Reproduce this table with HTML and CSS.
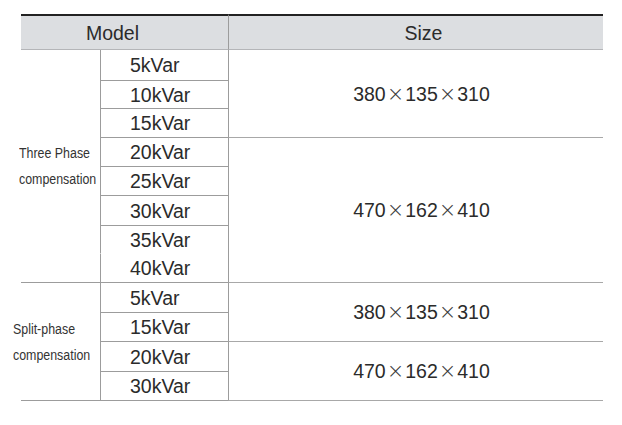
FILE: index.html
```html
<!DOCTYPE html>
<html>
<head>
<meta charset="utf-8">
<link rel="stylesheet" href="styles.css">
</head>
<body>
<table class="spec">
  <colgroup>
    <col class="c-group">
    <col class="c-model">
    <col class="c-size">
  </colgroup>
  <tr class="head">
    <th colspan="2" class="h-model">Model</th>
    <th class="h-size">Size</th>
  </tr>
  <tr class="r1">
    <td rowspan="8" class="group g1"><div class="glabel">Three Phase<br>compensation</div></td>
    <td class="m">5kVar</td>
    <td rowspan="3" class="s">380<span class="x">×</span>135<span class="x">×</span>310</td>
  </tr>
  <tr class="r2"><td class="m">10kVar</td></tr>
  <tr class="r3"><td class="m">15kVar</td></tr>
  <tr class="r4"><td class="m">20kVar</td>
    <td rowspan="5" class="s">470<span class="x">×</span>162<span class="x">×</span>410</td>
  </tr>
  <tr class="r5"><td class="m">25kVar</td></tr>
  <tr class="r6"><td class="m">30kVar</td></tr>
  <tr class="r7"><td class="m noline">35kVar</td></tr>
  <tr class="r8"><td class="m">40kVar</td></tr>
  <tr class="r9">
    <td rowspan="4" class="group g2"><div class="glabel">Split-phase<br>compensation</div></td>
    <td class="m">5kVar</td>
    <td rowspan="2" class="s">380<span class="x">×</span>135<span class="x">×</span>310</td>
  </tr>
  <tr class="r10"><td class="m">15kVar</td></tr>
  <tr class="r11"><td class="m">20kVar</td>
    <td rowspan="2" class="s">470<span class="x">×</span>162<span class="x">×</span>410</td>
  </tr>
  <tr class="r12"><td class="m">30kVar</td></tr>
</table>
</body>
</html>
```
FILE: styles.css
```css
html, body {
  margin: 0;
  padding: 0;
  background: #ffffff;
}
body {
  padding: 14px 0 0 21px;
  font-family: "Liberation Sans", Arial, sans-serif;
  color: #2b2b2b;
}
.spec {
  border-collapse: separate;
  border-spacing: 0;
  width: 582px;
  table-layout: fixed;
}
.c-group { width: 79px; }
.c-model { width: 128px; }
.c-size { width: 375px; }
.spec th, .spec td {
  padding: 0;
  box-sizing: border-box;
  font-weight: normal;
}
.head th {
  height: 36px;
  background: #dcdee1;
  border-top: 2px solid #222222;
  border-bottom: 1px solid #b4b5b8;
  font-size: 19.5px;
  vertical-align: middle;
  line-height: 22px;
}
.h-model {
  text-align: center;
  padding-right: 24px !important;
}
.h-size {
  border-left: 1px solid #9c9c9c;
  text-align: center;
  padding-left: 15px !important;
}
.m {
  border-left: 1px solid #9c9c9c;
  border-bottom: 1px solid #9c9c9c;
  font-size: 19.5px;
  line-height: 22px;
  padding-left: 29px !important;
  text-align: left;
  vertical-align: middle;
}
.m.noline {
  border-bottom-color: transparent;
}
.s {
  border-left: 1px solid #9c9c9c;
  border-bottom: 1px solid #a8a8a8;
  font-size: 19.5px;
  line-height: 22px;
  text-align: center;
  padding-left: 11px !important;
  vertical-align: middle;
}
.x {
  display: inline-block;
  width: 19.5px;
  text-align: center;
  font-family: "DejaVu Sans", sans-serif;
  font-size: 21px;
  font-weight: 200;
  color: #3a3a3a;
}
.group {
  border-bottom: 1px solid #9c9c9c;
  vertical-align: middle;
}
.glabel {
  font-size: 15.5px;
  line-height: 26px;
  color: #333;
  white-space: nowrap;
  transform: scaleX(0.8);
  transform-origin: left center;
}
.g1 .glabel {
  margin-left: -2px;
}
.g2 .glabel {
  margin-left: -8px;
}
.r1 td { height: 31px; }
.r2 td { height: 28px; }
.r3 td { height: 29px; }
.r4 td { height: 29px; }
.r5 td { height: 29px; }
.r6 td { height: 30px; }
.r7 td { height: 28px; }
.r8 td { height: 29px; }
.r9 td { height: 30px; }
.r10 td { height: 29px; }
.r11 td { height: 30px; }
.r12 td { height: 29px; }
.group, .s { height: auto !important; }
```
